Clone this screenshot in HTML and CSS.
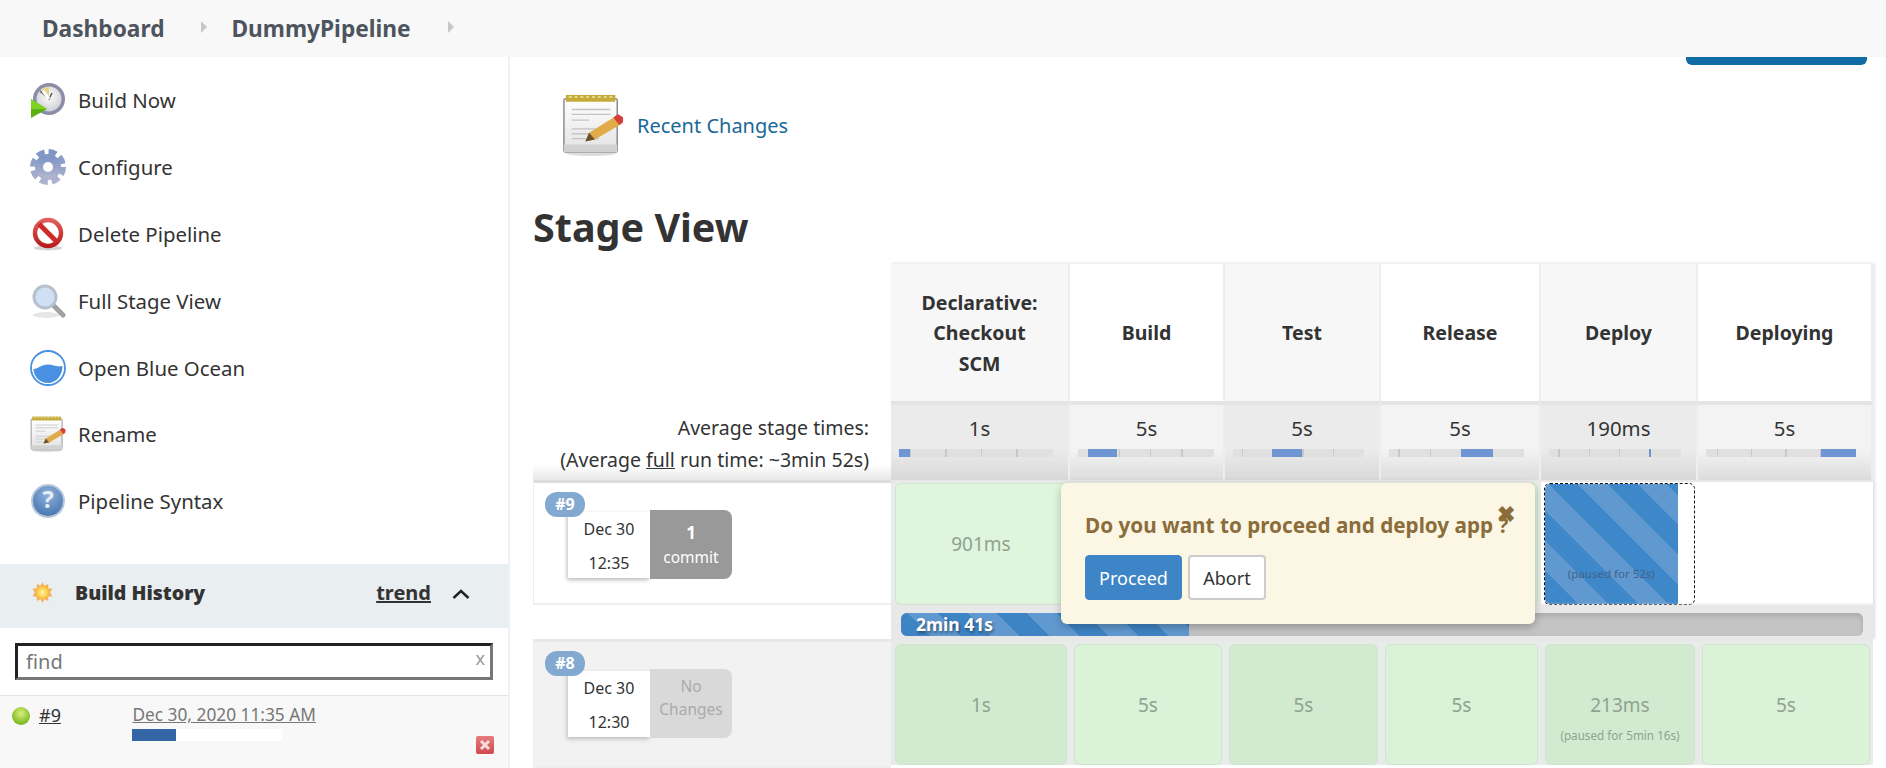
FILE: index.html
```html
<!DOCTYPE html>
<html lang="en">
<head>
<meta charset="utf-8">
<title>DummyPipeline</title>
<link rel="stylesheet" href="styles.css">
</head>
<body>
<header class="crumbs">
  <a class="crumb">Dashboard</a><span class="crumb-arrow"></span>
  <a class="crumb">DummyPipeline</a><span class="crumb-arrow"></span>
</header>
<div class="layout">
  <aside class="side">
    <nav class="tasks">
      <a class="task">
        <svg class="ico" viewBox="0 0 36 36"><defs><radialGradient id="face" cx=".5" cy=".4" r=".6"><stop offset="0" stop-color="#fff"/><stop offset="1" stop-color="#cfcfd6"/></radialGradient></defs><circle cx="19" cy="17" r="16" fill="#8b8ca6"/><circle cx="19" cy="17" r="12.5" fill="url(#face)"/><path d="M19 5a12 12 0 0 0-7 2.500L19 17z" fill="#e6d48a"/><path d="M10 9l9 8 3-6" fill="none" stroke="#555" stroke-width="1.500"/><path d="M13 9l6 8" stroke="#fff" stroke-width="3"/><path d="M1 17l16 10-16 9z" fill="#5bb016"/><path d="M1 17l16 10-16 0z" fill="#7ed321"/></svg>
        <span>Build Now</span>
      </a>
      <a class="task">
        <svg class="ico" viewBox="0 0 36 36"><defs><linearGradient id="gear" x1="0" y1="0" x2="0" y2="1"><stop offset="0" stop-color="#7f97c6"/><stop offset="1" stop-color="#aeb2cf"/></linearGradient></defs><circle cx="18" cy="18" r="15" fill="none" stroke="url(#gear)" stroke-width="6" stroke-dasharray="7.800 4"/><circle cx="18" cy="18" r="9" fill="none" stroke="url(#gear)" stroke-width="8"/></svg>
        <span>Configure</span>
      </a>
      <a class="task">
        <svg class="ico" viewBox="0 0 36 36"><defs><linearGradient id="red" x1="0" y1="0" x2="0" y2="1"><stop offset="0" stop-color="#e0605c"/><stop offset="1" stop-color="#b81c1c"/></linearGradient></defs><ellipse cx="18" cy="32" rx="14" ry="2.500" fill="#d6d6d6"/><circle cx="18" cy="17" r="13" fill="#fff" stroke="url(#red)" stroke-width="4.500"/><path d="M9 8l18 18" stroke="#cf2a2a" stroke-width="5"/></svg>
        <span>Delete Pipeline</span>
      </a>
      <a class="task">
        <svg class="ico" viewBox="0 0 36 36"><ellipse cx="16" cy="32" rx="13" ry="3" fill="#e6e6e6"/><path d="M22 21l11 11" stroke="#a2a2a2" stroke-width="5" stroke-linecap="round"/><circle cx="15" cy="14" r="11" fill="#cfe0f5" stroke="#b7c0cc" stroke-width="3"/></svg>
        <span>Full Stage View</span>
      </a>
      <a class="task">
        <svg class="ico" viewBox="0 0 36 36"><circle cx="18" cy="18" r="17" fill="#fff" stroke="#4a90e2" stroke-width="1.800"/><path d="M3.500 19c5 0 7-4.500 14.500-4.500 5 0 9 3 14.500 1.500 0 9-6 17-14.500 17S3.500 26 3.500 19z" fill="#4a90e2"/></svg>
        <span>Open Blue Ocean</span>
      </a>
      <a class="task">
        <svg class="ico" viewBox="0 0 64 64"><use href="#note"/></svg>
        <span>Rename</span>
      </a>
      <a class="task">
        <svg class="ico" viewBox="0 0 36 36"><defs><radialGradient id="help" cx=".5" cy=".3" r=".8"><stop offset="0" stop-color="#8fb2dc"/><stop offset="1" stop-color="#3a6ca8"/></radialGradient></defs><circle cx="18" cy="18" r="16" fill="url(#help)" stroke="#b9c6da" stroke-width="2"/><text class="help-q" x="18" y="25">?</text></svg>
        <span>Pipeline Syntax</span>
      </a>
    </nav>
    <section class="history">
      <div class="history-head">
        <svg class="sun" viewBox="0 0 22 22"><defs><radialGradient id="sun"><stop offset="0" stop-color="#fff6b0"/><stop offset="1" stop-color="#f9c22e"/></radialGradient></defs><path d="M11 0l2 4 4-2 0 4.500 4.500.5-2.500 4 2.500 4-4.500.5 0 4.500-4-2-2 4-2-4-4 2 0-4.500L.500 15 3 11 .500 7 5 6.500 5 2l4 2z" fill="#f5b25a"/><circle cx="11" cy="11" r="6.500" fill="url(#sun)"/></svg>
        <b class="history-title">Build History</b>
        <a class="trend">trend</a>
        <svg class="chevron" viewBox="0 0 18 10"><path d="M1.500 9L9 2l7.500 7" fill="none" stroke="#222" stroke-width="2.400"/></svg>
      </div>
      <div class="search">
        <input class="find" value="find" aria-label="find">
        <span class="find-x">x</span>
      </div>
      <div class="build">
        <svg class="ball" viewBox="0 0 18 20"><defs><radialGradient id="ball" cx=".5" cy=".35" r=".7"><stop offset="0" stop-color="#d6f07a"/><stop offset="1" stop-color="#6fae12"/></radialGradient></defs><circle cx="9" cy="10" r="9" fill="url(#ball)"/></svg>
        <a class="build-no">#9</a>
        <div class="build-info">
          <a class="build-date">Dec 30, 2020 11:35 AM</a>
          <div class="build-bar"><div class="build-fill"></div></div>
        </div>
        <svg class="stop" viewBox="0 0 18 18"><defs><linearGradient id="stop" x1="0" y1="0" x2="0" y2="1"><stop offset="0" stop-color="#e77a7c"/><stop offset="1" stop-color="#cf4a50"/></linearGradient></defs><rect width="18" height="18" rx="2" fill="url(#stop)"/><path d="M5 5l8 8M13 5l-8 8" stroke="#f4dcdc" stroke-width="3"/></svg>
      </div>
    </section>
  </aside>
  <main class="main">
    <div class="top-btn"></div>
    <a class="recent">
      <svg class="note" viewBox="0 0 64 64"><defs><linearGradient id="paper" x1="0" y1="0" x2="0" y2="1"><stop offset="0" stop-color="#fff"/><stop offset="1" stop-color="#e2e2e2"/></linearGradient></defs><g id="note"><ellipse cx="30" cy="61" rx="26" ry="3" fill="#ddd"/><rect x="2" y="5" width="55" height="55" rx="2" fill="url(#paper)" stroke="#8a8a8a" stroke-width="1.500"/><path d="M2 52h55v8H2z" fill="#d2d2d2"/><path d="M4 1h51v7H4z" fill="#c4ab3a"/><path d="M7 3h3M13 3h3M19 3h3M25 3h3M31 3h3M37 3h3M43 3h3M49 3h3" stroke="#f1e7a8" stroke-width="1.500"/><path d="M10 16h40M10 21h40M10 27h18M10 36h26M10 41h18M10 46h28" stroke="#c4c4c4" stroke-width="1.400"/><path d="M24 49l4-9 29-18 6 8-29 17z" fill="#e2ab4a"/><path d="M24 49l4-9 6 7z" fill="#6a5230"/><path d="M53 24l5-3 5 3 0 5-4 3z" fill="#d43f3a"/></g></svg>
      <span>Recent Changes</span>
    </a>
    <h1 class="title">Stage View</h1>
    <div class="stage">
      <div class="hd-blank"></div>
      <div class="hd alt">Declarative:<br>Checkout<br>SCM</div>
      <div class="hd">Build</div>
      <div class="hd alt">Test</div>
      <div class="hd">Release</div>
      <div class="hd alt">Deploy</div>
      <div class="hd">Deploying</div>

      <div class="avg-label">Average stage times:<br>(Average <u>full</u> run time: ~3min 52s)</div>
      <div class="avg alt"><span>1s</span><div class="track"><div class="track-fill" style="margin-left:0;width:7%"></div></div></div>
      <div class="avg avg-wide"><span>5s</span><div class="track"><div class="track-fill" style="margin-left:7%;width:22%"></div></div></div>
      <div class="avg alt"><span>5s</span><div class="track"><div class="track-fill" style="margin-left:29.500%;width:23.500%"></div></div></div>
      <div class="avg"><span>5s</span><div class="track"><div class="track-fill" style="margin-left:53.300%;width:23.400%"></div></div></div>
      <div class="avg alt"><span>190ms</span><div class="track"><div class="track-fill" style="margin-left:75.600%;width:1.500%"></div></div></div>
      <div class="avg"><span>5s</span><div class="track"><div class="track-fill" style="margin-left:76.500%;width:23.500%"></div></div></div>

      <div class="run-info">
        <span class="badge">#9</span>
        <div class="stamp"><span>Dec 30</span><span>12:35</span></div>
        <div class="commits"><b>1</b><span>commit</span></div>
      </div>
      <div class="cell alt"><div class="box">901ms</div></div>
      <div class="cell"><div class="box"></div></div>
      <div class="cell alt"><div class="box"></div></div>
      <div class="cell"><div class="box"></div></div>
      <div class="cell-paused"><div class="paused"><div class="paused-fill"><small>(paused for 52s)</small></div></div></div>
      <div class="cell-empty"></div>

      <div class="gap"></div>
      <div class="progress-wrap"><div class="progress"><div class="progress-fill">2min 41s</div></div></div>

      <div class="run-info run-old">
        <span class="badge">#8</span>
        <div class="stamp"><span>Dec 30</span><span>12:30</span></div>
        <div class="commits commits-none"><span>No</span><span>Changes</span></div>
      </div>
      <div class="cell old alt"><div class="box">1s</div></div>
      <div class="cell old"><div class="box">5s</div></div>
      <div class="cell old alt"><div class="box">5s</div></div>
      <div class="cell old"><div class="box">5s</div></div>
      <div class="cell old alt"><div class="box">213ms<small>(paused for 5min 16s)</small></div></div>
      <div class="cell old"><div class="box">5s</div></div>

      <div class="popover">
        <span class="pop-close">&#10006;</span>
        <div class="pop-text">Do you want to proceed and deploy app ?</div>
        <div class="pop-actions">
          <button class="btn btn-go">Proceed</button>
          <button class="btn btn-abort">Abort</button>
        </div>
      </div>
    </div>
  </main>
</div>
</body>
</html>
```

FILE: styles.css
```css
* { box-sizing: border-box; }
html, body { margin: 0; height: 768px; overflow: hidden; background: #fff; }
body { font-family: "Noto Sans", "Open Sans", sans-serif; font-size: 20.400px; color: #333; }

.crumbs { height: 57px; background: #f8f8f8; display: flex; align-items: center; padding: 0 0 0 42px; }
.crumb { font-size: 22.700px; font-weight: 700; color: #4d545d; }
.crumb-arrow { width: 0; height: 0; border-left: 6px solid #c8c8c8; border-top: 6px solid transparent; border-bottom: 6px solid transparent; margin: -4px 24px 0 37px; }

.layout { display: flex; height: 711px; }
.side { width: 510px; flex: none; border-right: 2px solid #eef0f1; padding-top: 10px; }
.main { flex: 1; padding-left: 23px; min-width: 0; }

.tasks { display: flex; flex-direction: column; }
.task { height: 66.800px; display: flex; align-items: center; padding-left: 30px; gap: 12px; color: #333; }
.ico { width: 36px; height: 36px; flex: none; }
.help-q { font-size: 24px; font-weight: 700; fill: #e8eef6; text-anchor: middle; }

.history { margin-top: 29.400px; }
.history-head { height: 64px; background: #e9eef1; display: flex; align-items: center; padding: 0 38px 6px 32px; font-weight: 700; }
.sun { width: 21px; height: 21px; flex: none; margin-right: 22px; }
.history-title { flex: 1; font-size: 19.500px; color: #333; }
.trend { font-size: 20px; text-decoration: underline; margin-right: 21px; }
.chevron { width: 18px; height: 10px; flex: none; margin-top: 2px; }
.search { position: relative; padding: 15px 15px 15px; }
.find { display: block; width: 478px; height: 37px; border: 3px solid; border-color: #222 #777 #777 #222; padding: 0 8px; font: 20px "Noto Sans", sans-serif; color: #777; background: #fff; }
.find-x { position: absolute; right: 23px; top: 18px; font-size: 18px; color: #999; }
.build { border-top: 1px solid #e4e4e4; background: #f8f8f8; height: 80px; display: flex; padding: 10px 14px 0 12px; }
.ball { width: 18px; height: 20px; flex: none; }
.build-no { width: 94px; margin-left: 9px; font-size: 18px; line-height: 18px; text-decoration: underline; color: #333; }
.build-info { width: 245px; }
.build-date { display: block; font-size: 17.300px; line-height: 18px; text-decoration: underline; color: #777; white-space: nowrap; }
.build-bar { margin-top: 5px; width: 150px; height: 12px; background: #fff; }
.build-fill { width: 44px; height: 12px; background: #3465a4; }
.stop { width: 18px; height: 18px; flex: none; margin: 30px 0 0 100px; }

.top-btn { width: 181px; height: 8px; margin-left: 1153px; background: #0f6ba3; border-radius: 0 0 6px 6px; }
.recent { display: flex; align-items: center; margin: 28px 0 0 29px; gap: 13px; color: #196899; font-size: 20px; }
.note { width: 62px; height: 64px; flex: none; }
.title { margin: 45px 0 0; font-size: 39.500px; line-height: 50px; font-weight: 700; color: #333; }

.stage { position: relative; margin-top: 11px; display: grid; grid-template-columns: 358px 179px 155px 156px 160px 157px 175px; grid-template-rows: 142px 75px 125px 34px 129px; }
.hd { display: flex; align-items: center; justify-content: center; text-align: center; font-weight: 700; font-size: 19.500px; line-height: 30.500px; padding-top: 2px; background: #fff; border-top: 1px solid #eee; border-right: 2px solid #eee; border-bottom: 4px solid #e4e4e4; box-shadow: 2px 0 3px #e8e8e8; }
.hd.alt { background: #f7f7f7; }
.avg-label { text-align: right; padding: 7px 22px 0 0; line-height: 32px; background: linear-gradient(#fff 80%, #e8e8e8); font-size: 19.500px; }
.avg { text-align: center; padding-top: 8px; background: linear-gradient(#f3f3f3 60%, #dcdcdc); border-right: 2px solid #eee; box-shadow: 2px 0 3px #e8e8e8; }
.avg.alt { background: linear-gradient(#ebebeb 60%, #d8d8d8); }
.avg span { display: block; line-height: 30px; }
.track { height: 8px; margin: 6px 15px 0 8px; background: linear-gradient(90deg, #e0e0e0 7%, #c8c8c8 7% 8%, #e0e0e0 8% 30%, #c8c8c8 30% 31%, #e0e0e0 31% 53%, #c8c8c8 53% 54%, #e0e0e0 54% 76%, #c8c8c8 76% 77%, #e0e0e0 77%); }
.avg-wide .track { margin-right: 9px; }
.track-fill { height: 8px; background: #6f95d2; }

.run-info { position: relative; background: #fff; border-top: 3px solid #ddd; border-bottom: 2px solid #eee; border-left: 1px solid #eee; display: flex; align-items: flex-start; padding: 29px 0 0 34px; }
.badge { position: absolute; left: 11px; top: 9px; width: 40px; height: 25px; border-radius: 12px; background: #84a9d1; color: #fff; font-size: 16px; font-weight: 700; text-align: center; line-height: 25px; }
.stamp { width: 82px; height: 66px; background: #fff; box-shadow: -1px 2px 4px #bbb; display: flex; flex-direction: column; justify-content: space-between; align-items: center; font-size: 16px; line-height: 34px; }
.commits { width: 82px; height: 69px; margin-top: -2px; background: #999; color: #fff; border-radius: 0 8px 8px 0; display: flex; flex-direction: column; align-items: center; justify-content: center; font-size: 15.500px; line-height: 24px; }
.commits b { font-size: 17px; }
.commits-none { background: #d9d9d9; color: #aaa; line-height: 23px; padding-bottom: 12px; }
.run-old { background: #f2f2f2; border-top-color: #e8e8e8; }

.cell { background: #e8ece8; padding: 1px 3px 0 4px; border-top: 2px solid #e8e8e8; }
.box { height: 100%; background: #dcf5da; border: 1px solid #d0e4d0; border-radius: 6px; color: #8fa38f; font-size: 19px; display: flex; flex-direction: column; align-items: center; justify-content: center; }
.cell.alt .box { background: #dff5dd; }
.old .box { background: #daf2d8; }
.cell.old.alt .box { background: #d2ebd0; }
.old { padding-top: 3px; height: 126px; }
.box small { font-size: 11.700px; margin-top: 6px; margin-bottom: -28px; line-height: 22px; }
.cell-paused { background: #fff; padding: 1px 3px 0 3px; border-top: 2px solid #e8e8e8; }
.paused { height: 100%; border: 1px dashed #111; border-radius: 6px; }
.paused-fill { width: 89%; height: 100%; border-radius: 5px 0 0 5px; background: repeating-linear-gradient(45deg, #6099d0 0 3px, #3e88ca 3px 24px, #6099d0 24px 42px); text-align: center; padding-top: 72px; }
.paused-fill small { font-size: 11.500px; color: #3f628a; line-height: 22px; }
.cell-empty { background: #fff; border-top: 2px solid #e8e8e8; box-shadow: 2px 0 3px #ddd; }
.gap { background: #fff; }
.progress-wrap { grid-column: span 6; background: #e8e8e8; padding: 8px 10px 3px 10px; box-shadow: 2px 0 3px #ddd; }
.progress { height: 23px; background: #c4c4c4; border-radius: 6px; box-shadow: inset 0 3px 5px #aaa; overflow: hidden; }
.progress-fill { width: 288px; height: 23px; padding-left: 15px; color: #fff; font-weight: 700; font-size: 17.500px; line-height: 23px; text-shadow: 1px 2px 3px rgba(0,0,0,.45); background: repeating-linear-gradient(45deg, #3e84c4 0 21px, #6099d0 21px 42px); }

.popover { position: absolute; left: 528px; top: 220px; width: 474px; height: 141px; padding: 26px 24px; background: #fcf7e4; border-radius: 6px; box-shadow: 0 3px 8px rgba(0,0,0,.25); }
.pop-close { position: absolute; left: 436px; top: 14px; font-size: 22px; font-weight: 700; line-height: 32px; color: #8a6d3b; }
.pop-text { font-size: 20.700px; font-weight: 700; line-height: 32px; color: #8a6d3b; white-space: nowrap; }
.pop-actions { display: flex; gap: 6px; margin-top: 14px; }
.btn { height: 45px; border-radius: 4px; font: 18px "Noto Sans", sans-serif; padding: 0; }
.btn-go { width: 97px; background: #3d85c6; border: 1px solid #3d85c6; color: #fff; }
.btn-abort { width: 78px; background: #fff; border: 2px solid #ccc; color: #333; }
```
